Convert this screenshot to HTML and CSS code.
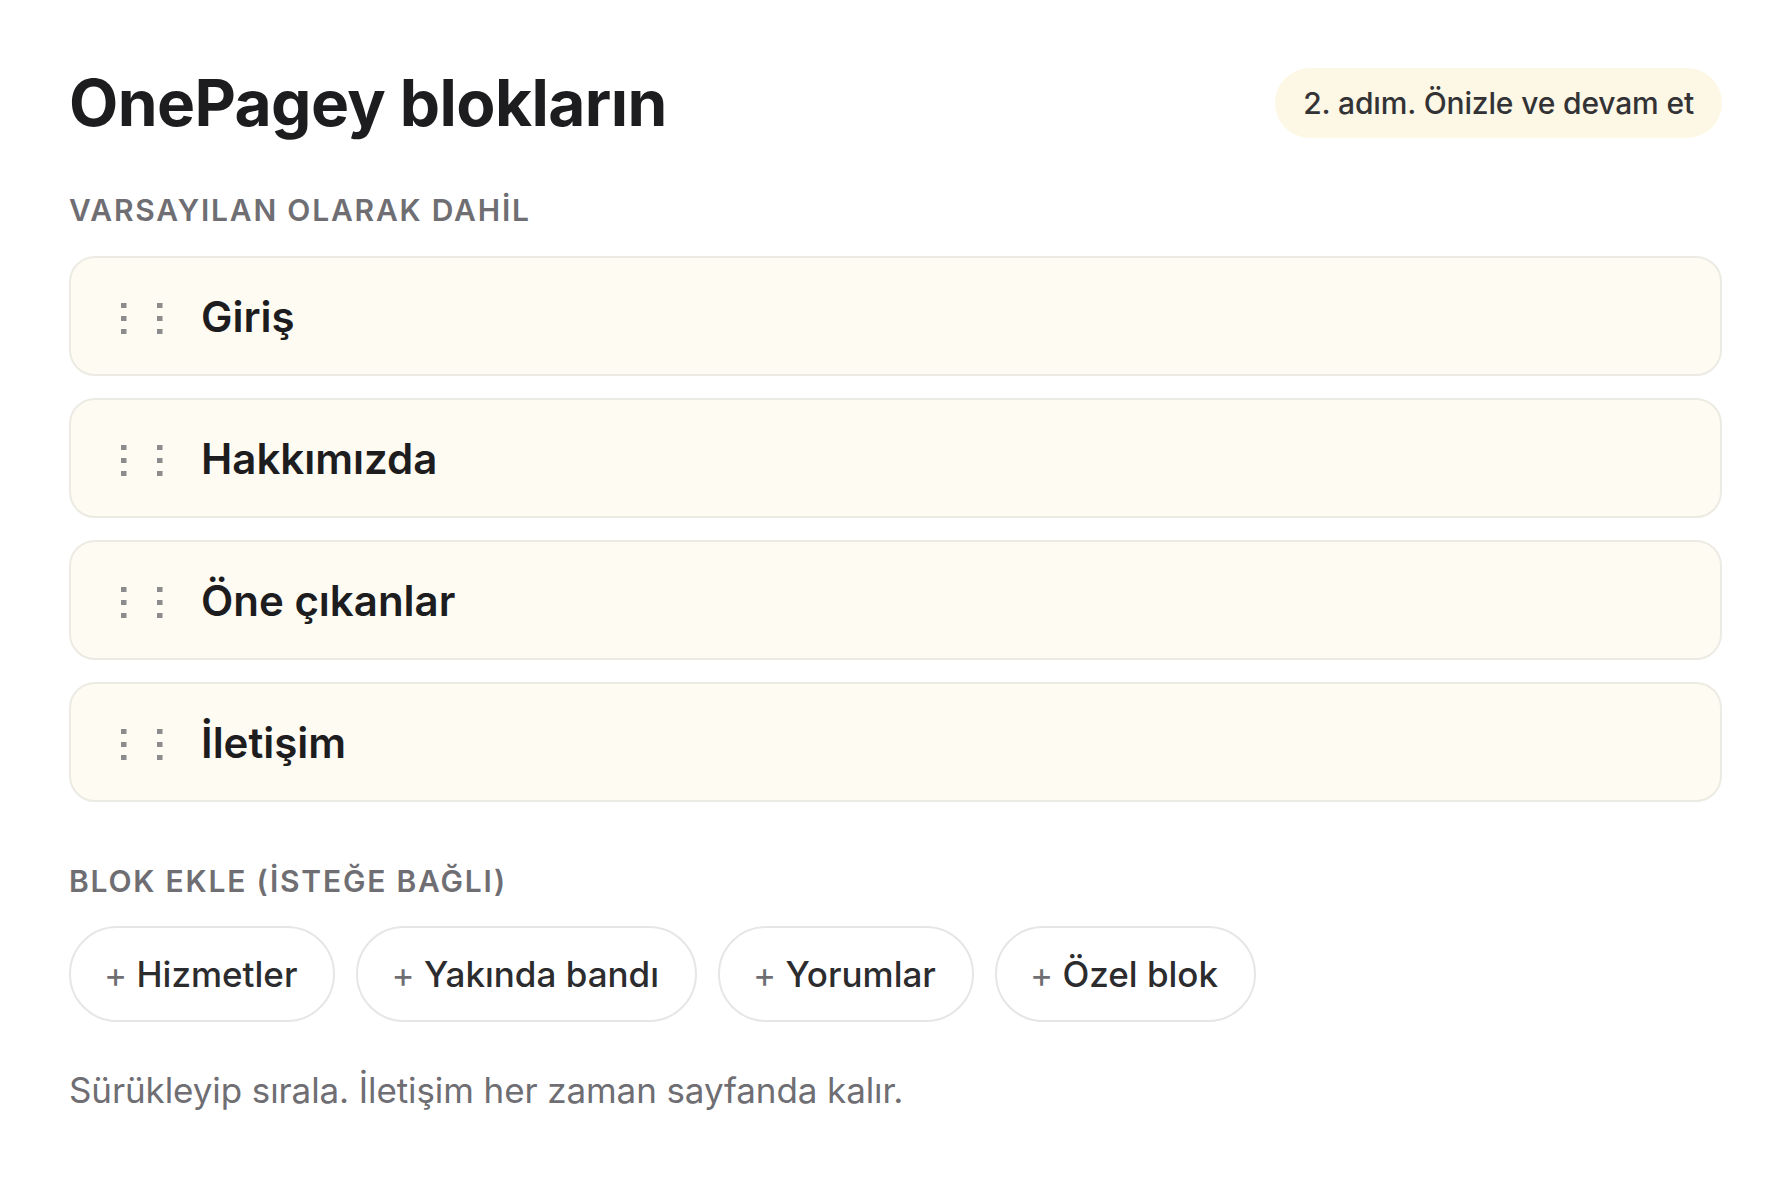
FILE: index.html
```html
<!DOCTYPE html>
<html lang="tr">
<head>
    <meta charset="UTF-8">
    <meta name="viewport" content="width=device-width, initial-scale=1.0">
    <title>OnePagey bloklar</title>
    <link rel="stylesheet" href="styles.css">
</head>
<body>
    <div class="page">
        <div class="header">
            <h1>OnePagey blokların</h1>
            <div class="badge">2. adım. Önizle ve devam et</div>
        </div>

        <h2 class="label first">VARSAYILAN OLARAK DAHİL</h2>
        <div class="blocks">
            <div class="block">
                <svg class="grip" width="42" height="31" viewBox="0 0 42 31"><g fill="#8c8c8c"><rect x="0" y="0" width="5.5" height="5"/><rect x="0" y="13" width="5.5" height="5"/><rect x="0" y="26" width="5.5" height="5"/><rect x="36" y="0" width="5.5" height="5"/><rect x="36" y="13" width="5.5" height="5"/><rect x="36" y="26" width="5.5" height="5"/></g></svg>
                <span>Giriş</span>
            </div>
            <div class="block">
                <svg class="grip" width="42" height="31" viewBox="0 0 42 31"><g fill="#8c8c8c"><rect x="0" y="0" width="5.5" height="5"/><rect x="0" y="13" width="5.5" height="5"/><rect x="0" y="26" width="5.5" height="5"/><rect x="36" y="0" width="5.5" height="5"/><rect x="36" y="13" width="5.5" height="5"/><rect x="36" y="26" width="5.5" height="5"/></g></svg>
                <span>Hakkımızda</span>
            </div>
            <div class="block">
                <svg class="grip" width="42" height="31" viewBox="0 0 42 31"><g fill="#8c8c8c"><rect x="0" y="0" width="5.5" height="5"/><rect x="0" y="13" width="5.5" height="5"/><rect x="0" y="26" width="5.5" height="5"/><rect x="36" y="0" width="5.5" height="5"/><rect x="36" y="13" width="5.5" height="5"/><rect x="36" y="26" width="5.5" height="5"/></g></svg>
                <span>Öne çıkanlar</span>
            </div>
            <div class="block">
                <svg class="grip" width="42" height="31" viewBox="0 0 42 31"><g fill="#8c8c8c"><rect x="0" y="0" width="5.5" height="5"/><rect x="0" y="13" width="5.5" height="5"/><rect x="0" y="26" width="5.5" height="5"/><rect x="36" y="0" width="5.5" height="5"/><rect x="36" y="13" width="5.5" height="5"/><rect x="36" y="26" width="5.5" height="5"/></g></svg>
                <span>İletişim</span>
            </div>
        </div>

        <h2 class="label second">BLOK EKLE (İSTEĞE BAĞLI)</h2>
        <div class="chips">
            <button class="chip"><span class="plus">+</span> Hizmetler</button>
            <button class="chip"><span class="plus">+</span> Yakında bandı</button>
            <button class="chip"><span class="plus">+</span> Yorumlar</button>
            <button class="chip"><span class="plus">+</span> Özel blok</button>
        </div>

        <p class="note">Sürükleyip sırala. İletişim her zaman sayfanda kalır.</p>
    </div>
</body>
</html>
```

FILE: styles.css
```css
*{
    box-sizing: border-box;
    margin: 0;
    padding: 0;
}
body{
    background-color: #ffffff;
    font-family: Inter, "Liberation Sans", sans-serif;
    color: #1d1d1f;
}
.page{
    padding: 68px 70px 60px 69px;
}
.header{
    display: flex;
    justify-content: space-between;
    align-items: center;
    height: 70px;
}
h1{
    font-size: 64px;
    line-height: 70px;
    font-weight: 700;
    letter-spacing: -0.6px;
    color: #1d1d1f;
}
.badge{
    height: 70px;
    line-height: 70px;
    padding: 0 28px;
    border-radius: 35px;
    background-color: #fdf7e5;
    color: #333336;
    font-size: 30px;
    font-weight: 500;
    letter-spacing: -0.15px;
}
.label{
    font-size: 30px;
    line-height: 34px;
    font-weight: 600;
    letter-spacing: 1.8px;
    color: #6e6e73;
}
.label.first{
    margin-top: 55px;
    margin-bottom: 29px;
}
.label.second{
    margin-top: 62px;
    margin-bottom: 28px;
}
.blocks{
    display: flex;
    flex-direction: column;
    gap: 22px;
}
.block{
    display: flex;
    align-items: center;
    gap: 38px;
    height: 120px;
    padding-left: 50px;
    border: 2px solid #ecebe3;
    border-radius: 26px;
    background-color: #fefbf3;
    font-size: 42px;
    font-weight: 600;
    color: #1d1d1f;
}
.grip{
    display: block;
    flex: none;
    margin-top: 4px;
}
.chips{
    display: flex;
    gap: 21px;
}
.chip{
    height: 96px;
    padding: 0 36px 0 33px;
    border: 2px solid #e6e6e6;
    border-radius: 48px;
    background-color: #ffffff;
    font-family: inherit;
    font-size: 35px;
    font-weight: 500;
    color: #2c2c2e;
}
.plus{
    color: #6e6e73;
    font-weight: 400;
}
.note{
    margin-top: 46px;
    font-size: 35px;
    line-height: 44px;
    letter-spacing: -0.1px;
    color: #6e6e73;
}
```
